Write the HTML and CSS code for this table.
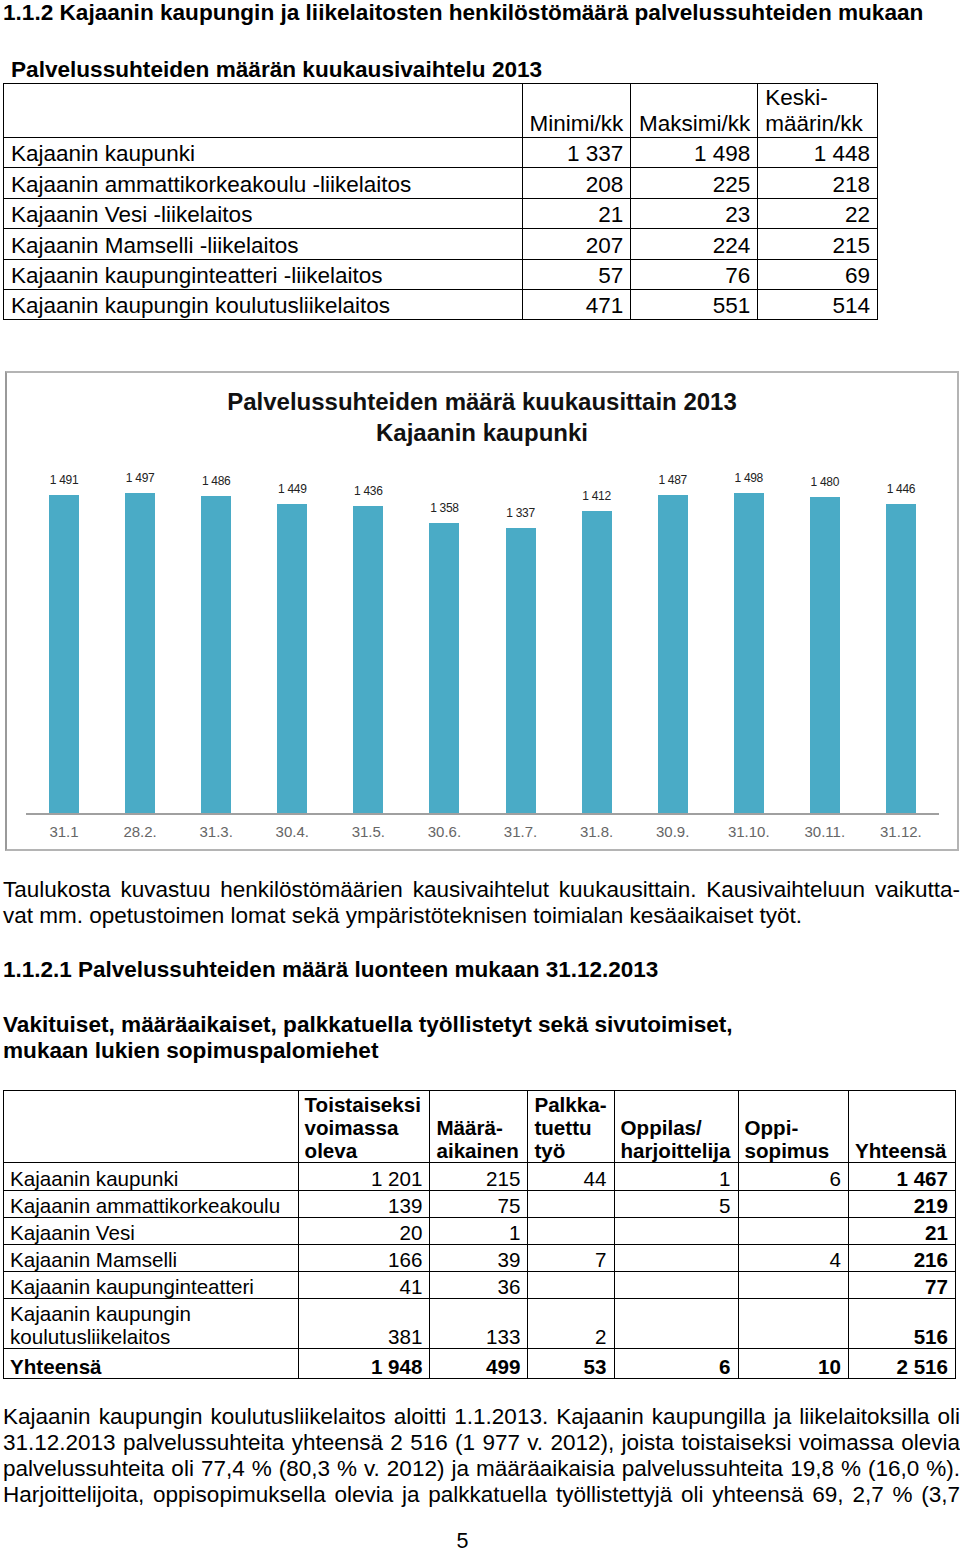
FILE: index.html
```html
<!DOCTYPE html>
<html lang="fi">
<head>
<meta charset="utf-8">
<title>Palvelussuhteet</title>
<link rel="stylesheet" href="styles.css">
</head>
<body>
<div class="page">
  <h1 class="h1">1.1.2 Kajaanin kaupungin ja liikelaitosten henkilöstömäärä palvelussuhteiden mukaan</h1>
  <h2 class="h2">Palvelussuhteiden määrän kuukausivaihtelu 2013</h2>
  <table class="t1">
    <colgroup><col class="c1"><col class="c2"><col class="c3"><col class="c4"></colgroup>
    <tr class="head"><td></td><td class="num">Minimi/kk</td><td class="num">Maksimi/kk</td><td class="lft">Keski-<br>määrin/kk</td></tr>
    <tr><td>Kajaanin kaupunki</td><td class="num">1 337</td><td class="num">1 498</td><td class="num">1 448</td></tr>
    <tr><td>Kajaanin ammattikorkeakoulu -liikelaitos</td><td class="num">208</td><td class="num">225</td><td class="num">218</td></tr>
    <tr><td>Kajaanin Vesi -liikelaitos</td><td class="num">21</td><td class="num">23</td><td class="num">22</td></tr>
    <tr><td>Kajaanin Mamselli -liikelaitos</td><td class="num">207</td><td class="num">224</td><td class="num">215</td></tr>
    <tr><td>Kajaanin kaupunginteatteri -liikelaitos</td><td class="num">57</td><td class="num">76</td><td class="num">69</td></tr>
    <tr><td>Kajaanin kaupungin koulutusliikelaitos</td><td class="num">471</td><td class="num">551</td><td class="num">514</td></tr>
  </table>

  <div class="chart">
    <div class="chart-title">Palvelussuhteiden määrä kuukausittain 2013<br>Kajaanin kaupunki</div>
    <div class="plot">
      <div class="col"><span class="val">1 491</span><div class="bar" style="height:318px"></div></div>
      <div class="col"><span class="val">1 497</span><div class="bar" style="height:320px"></div></div>
      <div class="col"><span class="val">1 486</span><div class="bar" style="height:317px"></div></div>
      <div class="col"><span class="val">1 449</span><div class="bar" style="height:309px"></div></div>
      <div class="col"><span class="val">1 436</span><div class="bar" style="height:307px"></div></div>
      <div class="col"><span class="val">1 358</span><div class="bar" style="height:290px"></div></div>
      <div class="col"><span class="val">1 337</span><div class="bar" style="height:285px"></div></div>
      <div class="col"><span class="val">1 412</span><div class="bar" style="height:302px"></div></div>
      <div class="col"><span class="val">1 487</span><div class="bar" style="height:318px"></div></div>
      <div class="col"><span class="val">1 498</span><div class="bar" style="height:320px"></div></div>
      <div class="col"><span class="val">1 480</span><div class="bar" style="height:316px"></div></div>
      <div class="col"><span class="val">1 446</span><div class="bar" style="height:309px"></div></div>
    </div>
    <div class="xaxis">
      <span>31.1</span><span>28.2.</span><span>31.3.</span><span>30.4.</span><span>31.5.</span><span>30.6.</span>
      <span>31.7.</span><span>31.8.</span><span>30.9.</span><span>31.10.</span><span>30.11.</span><span>31.12.</span>
    </div>
  </div>

  <p class="para p1">Taulukosta kuvastuu henkilöstömäärien kausivaihtelut kuukausittain. Kausivaihteluun vaikutta­vat mm. opetustoimen lomat sekä ympäristöteknisen toimialan kesäaikaiset työt.</p>

  <h3 class="h3">1.1.2.1 Palvelussuhteiden määrä luonteen mukaan 31.12.2013</h3>

  <h3 class="h3b">Vakituiset, määräaikaiset, palkkatuella työllistetyt sekä sivutoimiset,<br>mukaan lukien sopimuspalomiehet</h3>

  <table class="t2">
    <colgroup><col class="d1"><col class="d2"><col class="d3"><col class="d4"><col class="d5"><col class="d6"><col class="d7"></colgroup>
    <tr class="head">
      <td></td><td>Toistaiseksi<br>voimassa<br>oleva</td><td>Määrä-<br>aikainen</td><td>Palkka-<br>tuettu<br>työ</td><td>Oppilas/<br>harjoittelija</td><td>Oppi-<br>sopimus</td><td>Yhteensä</td>
    </tr>
    <tr><td>Kajaanin kaupunki</td><td class="num">1 201</td><td class="num">215</td><td class="num">44</td><td class="num">1</td><td class="num">6</td><td class="num b">1 467</td></tr>
    <tr><td>Kajaanin ammattikorkeakoulu</td><td class="num">139</td><td class="num">75</td><td></td><td class="num">5</td><td></td><td class="num b">219</td></tr>
    <tr><td>Kajaanin Vesi</td><td class="num">20</td><td class="num">1</td><td></td><td></td><td></td><td class="num b">21</td></tr>
    <tr><td>Kajaanin Mamselli</td><td class="num">166</td><td class="num">39</td><td class="num">7</td><td></td><td class="num">4</td><td class="num b">216</td></tr>
    <tr><td>Kajaanin kaupunginteatteri</td><td class="num">41</td><td class="num">36</td><td></td><td></td><td></td><td class="num b">77</td></tr>
    <tr class="tall"><td>Kajaanin kaupungin<br>koulutusliikelaitos</td><td class="num">381</td><td class="num">133</td><td class="num">2</td><td></td><td></td><td class="num b">516</td></tr>
    <tr class="total"><td>Yhteensä</td><td class="num">1 948</td><td class="num">499</td><td class="num">53</td><td class="num">6</td><td class="num">10</td><td class="num">2 516</td></tr>
  </table>

  <p class="para p2">Kajaanin kaupungin koulutusliikelaitos aloitti 1.1.2013. Kajaanin kaupungilla ja liikelaitoksilla oli 31.12.2013 palvelussuhteita yhteensä 2 516 (1 977 v. 2012), joista toistaiseksi voimassa olevia palvelussuhteita oli 77,4 % (80,3 % v. 2012) ja määräaikaisia palvelussuhteita 19,8 % (16,0 %). Harjoittelijoita, oppisopimuksella olevia ja palkkatuella työllistettyjä oli yhteensä 69, 2,7 % (3,7</p>

  <div class="pagenum">5</div>
</div>
</body>
</html>
```

FILE: styles.css
```css
html, body {
  margin: 0;
  padding: 0;
  background: #fff;
}
body {
  font-family: "Liberation Sans", Arial, sans-serif;
  color: #000;
}
.page {
  width: 960px;
  padding: 0 0 0 3px;
  box-sizing: border-box;
}
.h1 {
  margin: 0;
  padding-top: 1px;
  font-size: 22.6px;
  line-height: 24px;
  font-weight: bold;
}
.h2 {
  margin: 32px 0 0 8px;
  font-size: 22.6px;
  line-height: 26px;
  font-weight: bold;
}
.t1 {
  border-collapse: collapse;
  margin-top: 0;
  font-size: 22.5px;
  width: 875px;
}
.t1 td {
  border: 1px solid #000;
  padding: 0 7px;
  height: 29.4px;
  line-height: 26px;
  vertical-align: bottom;
  white-space: nowrap;
}
.t1 .head td { height: 53px; }
.t1 .c1 { width: 522px; }
.t1 .c2 { width: 105px; }
.t1 .c3 { width: 127px; }
.t1 .c4 { width: 120px; }
.num { text-align: right; }
.lft { text-align: left; }

.chart {
  margin: 51px 1px 0 2px;
  height: 480px;
  border: 2px solid #b4b4b4;
  border-left-color: #9a9a9a;
  box-sizing: border-box;
}
.chart-title {
  text-align: center;
  font-weight: bold;
  font-size: 24px;
  line-height: 31px;
  padding-top: 13px;
  color: #111;
}
.plot {
  display: flex;
  align-items: flex-end;
  height: 378px;
  margin: -13px 18px 0 19px;
  border-bottom: 2px solid #a0a0a0;
}
.col {
  flex: 1;
  display: flex;
  flex-direction: column;
  align-items: center;
  justify-content: flex-end;
}
.val {
  font-size: 12px;
  letter-spacing: -0.3px;
  line-height: 14px;
  color: #222;
  margin-bottom: 8px;
}
.bar {
  width: 30px;
  background: #4aabc6;
}
.xaxis {
  display: flex;
  margin: 0 18px 0 19px;
  padding-top: 8px;
}
.xaxis span {
  flex: 1;
  text-align: center;
  font-size: 15px;
  line-height: 17px;
  color: #666;
}

.para {
  margin: 0;
  font-size: 22.5px;
  line-height: 26px;
  text-align: justify;
}
.p1 { margin-top: 26px; }
.h3 {
  margin: 28px 0 0;
  font-size: 22.5px;
  line-height: 26px;
  font-weight: bold;
}
.h3b {
  margin: 29px 0 0;
  font-size: 22.6px;
  line-height: 26px;
  font-weight: bold;
}

.t2 {
  border-collapse: collapse;
  margin-top: 26px;
  width: 953px;
  font-size: 20.6px;
}
.t2 td {
  border: 1px solid #000;
  padding: 0 7px 0 6px;
  height: 26.2px;
  line-height: 23px;
  vertical-align: bottom;
  white-space: nowrap;
}
.t2 .head td {
  font-weight: bold;
  height: 71px;
  text-align: left;
}
.t2 .d1 { width: 295px; }
.t2 .d2 { width: 132px; }
.t2 .d3 { width: 98px; }
.t2 .d4 { width: 86px; }
.t2 .d5 { width: 124px; }
.t2 .d6 { width: 111px; }
.t2 .d7 { width: 107px; }
.t2 .b { font-weight: bold; }
.t2 .tall td { height: 49px; }
.t2 .total td { font-weight: bold; height: 29px; }

.p2 {
  margin-top: 25px;
  text-align-last: justify;
}
.pagenum {
  margin-top: 22px;
  text-align: center;
  font-size: 21.5px;
  line-height: 22px;
  padding-right: 38px;
}
```
